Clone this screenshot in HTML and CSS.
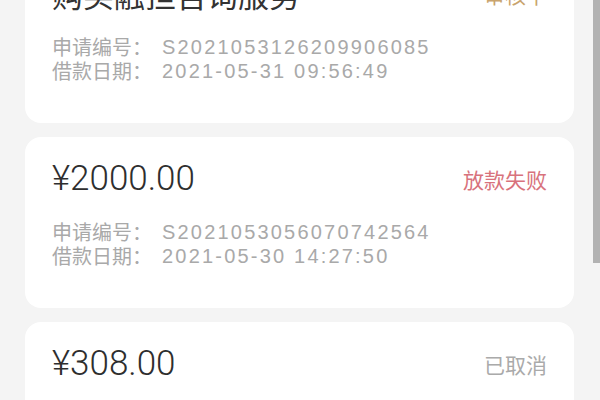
FILE: index.html
```html
<!DOCTYPE html>
<html lang="zh-CN">
<head>
    <meta charset="UTF-8">
    <meta name="viewport" content="width=device-width, initial-scale=1.0">
    <title>借款记录</title>
    <link rel="stylesheet" href="styles.css">
</head>
<body>
    <div class="page">
        <!-- list is scrolled down a little, first card is cut at the top -->
        <div class="loan-list">

            <div class="loan-card">
                <div class="loan-head">
                    <div class="loan-title">购买融担咨询服务</div>
                    <div class="loan-status status-pending">审核中</div>
                </div>
                <div class="loan-info">
                    <div class="info-row"><span class="info-label">申请编号：</span><span class="info-value">S2021053126209906085</span></div>
                    <div class="info-row"><span class="info-label">借款日期：</span><span class="info-value">2021-05-31 09:56:49</span></div>
                </div>
            </div>

            <div class="loan-card">
                <div class="loan-head">
                    <div class="loan-amount">¥2000.00</div>
                    <div class="loan-status status-failed">放款失败</div>
                </div>
                <div class="loan-info">
                    <div class="info-row"><span class="info-label">申请编号：</span><span class="info-value">S2021053056070742564</span></div>
                    <div class="info-row"><span class="info-label">借款日期：</span><span class="info-value">2021-05-30 14:27:50</span></div>
                </div>
            </div>

            <div class="loan-card">
                <div class="loan-head">
                    <div class="loan-amount">¥308.00</div>
                    <div class="loan-status status-cancel">已取消</div>
                </div>
                <div class="loan-info">
                    <div class="info-row"><span class="info-label">申请编号：</span><span class="info-value">S2021052918334120761</span></div>
                    <div class="info-row"><span class="info-label">借款日期：</span><span class="info-value">2021-05-29 18:33:41</span></div>
                </div>
            </div>

        </div>
        <div class="scroll-thumb"></div>
    </div>
</body>
</html>
```

FILE: styles.css
```css
* {
    margin: 0;
    padding: 0;
    box-sizing: border-box;
}

body {
    font-family: 'Liberation Sans', 'Noto Sans CJK SC', sans-serif;
    background: #f4f4f4;
    width: 600px;
    height: 400px;
    overflow: hidden;
}

.page { position: relative; height: 400px; overflow: hidden; padding: 0 26px 0 25px; }
.loan-list { margin-top: -48px; display: flex; flex-direction: column; gap: 14px; }

.loan-card { background: #fff; border-radius: 16px; height: 171px; padding: 22px 27px 0 27px; }
.loan-head { display: flex; align-items: center; justify-content: space-between; height: 40px; }
.loan-amount { font-family: Roboto, 'Liberation Sans', sans-serif; font-weight: 300; font-size: 35px; line-height: 40px; color: #2e2e2e; }
.loan-title { font-family: 'Noto Sans CJK SC', sans-serif; font-size: 31px; line-height: 40px; color: #333; }
.loan-status { font-family: 'Noto Sans CJK SC', sans-serif; font-size: 21px; line-height: 28px; }
.status-pending { color: #c9a46e; }
.status-failed { color: #d8727c; }
.status-cancel { color: #aaa; }

.loan-info { margin-top: 21px; }
.info-row { font-size: 20px; line-height: 24px; color: #a9a9a9; white-space: nowrap; display: flex; }
.info-label { font-family: 'Noto Sans CJK SC', sans-serif; }
.info-value { letter-spacing: 2.2px; margin-left: 10px; }

.scroll-thumb { position: absolute; top: 0; right: 0; width: 7px; height: 263px; background: #b2b2b2; }
```
